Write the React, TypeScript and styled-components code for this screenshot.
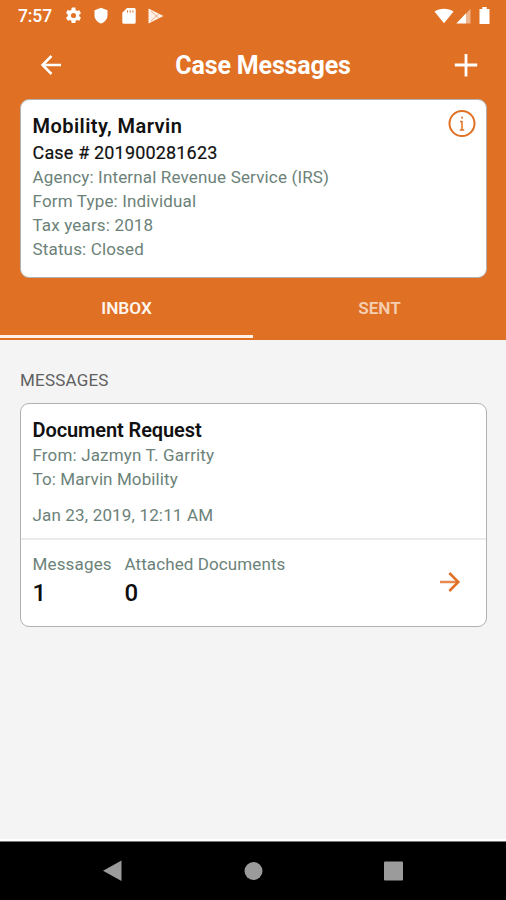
import React from "react";
import styled, { createGlobalStyle } from "styled-components";

const ORANGE = "#e07024";

const GlobalStyle = createGlobalStyle`
  * { box-sizing: border-box; }
  body { margin: 0; background: #f4f4f4; font-family: Roboto, "Liberation Sans", sans-serif; }
`;

const Screen = styled.div`
  display: flex;
  flex-direction: column;
  width: 506px;
  height: 900px;
  overflow: hidden;
  background: #f4f4f4;
`;

const Top = styled.header`
  display: flex;
  flex-direction: column;
  height: 340px;
  background: ${ORANGE};
`;

const StatusBar = styled.div`
  display: flex;
  justify-content: space-between;
  height: 32px;
  padding: 0 16px 0 18px;
  color: #fff;
`;

const StatusGroup = styled.div`
  display: flex;
  align-items: center;
  height: 31px;
`;

const Clock = styled.span`
  width: 46px;
  font-size: 17.5px;
  font-weight: 500;
  line-height: 32px;
  letter-spacing: -0.1px;
`;

const Icon = styled.svg<{ $w: number; $h: number; $ml?: number }>`
  display: block;
  flex: none;
  width: ${(p) => p.$w}px;
  height: ${(p) => p.$h}px;
  margin-left: ${(p) => p.$ml ?? 0}px;
`;

const TitleBar = styled.div`
  display: flex;
  align-items: center;
  height: 67px;
  padding: 0 28px 0 40px;
`;

const Title = styled.h1`
  flex: 1;
  margin: 0;
  padding: 1px 0 0 10px;
  font-size: 25px;
  font-weight: 700;
  line-height: 32px;
  letter-spacing: -0.15px;
  text-align: center;
  color: #fff;
`;

const Card = styled.section<{ $height: number }>`
  display: flex;
  flex-direction: column;
  flex: none;
  height: ${(p) => p.$height}px;
  margin: 0 19px 0 20px;
  border: 1.5px solid #b0b2b1;
  border-radius: 9px;
  background: #fff;
`;

const CaseBody = styled.div`
  display: flex;
  justify-content: space-between;
  padding: 13px 10px 0 11.5px;
`;

const InfoSlot = styled.div`
  margin-top: -3px;
`;

const Name = styled.h2<{ $spacing: number }>`
  margin: 0;
  font-size: 20px;
  font-weight: 600;
  line-height: 26px;
  letter-spacing: ${(p) => p.$spacing}px;
  color: #111;
`;

const CaseNumber = styled.div`
  padding-top: 1px;
  margin-bottom: -1px;
  font-size: 18px;
  line-height: 26px;
  letter-spacing: 0.17px;
  color: #111;
  -webkit-text-stroke: 0.2px #111;
`;

const Detail = styled.div<{ $spacing?: number; $gap?: number }>`
  margin-top: ${(p) => p.$gap ?? 0}px;
  font-size: 17px;
  line-height: 24px;
  letter-spacing: ${(p) => p.$spacing ?? 0.16}px;
  white-space: nowrap;
  color: #6c8279;
`;

const Tabs = styled.nav`
  display: flex;
  flex: 1;
`;

const Tab = styled.div<{ $active?: boolean }>`
  flex: 1;
  height: 60px;
  border-bottom: 3px solid ${(p) => (p.$active ? "#fff1e6" : "transparent")};
  font-size: 17.2px;
  font-weight: 600;
  line-height: 61px;
  text-align: center;
  color: ${(p) => (p.$active ? "#fff5ec" : "#f5ceb1")};
`;

const SectionLabel = styled.h3`
  margin: 0;
  padding: 28px 20px 11px;
  font-size: 17px;
  font-weight: 400;
  line-height: 24px;
  letter-spacing: 0.2px;
  color: #606060;
`;

const Content = styled.main`
  flex: 1;
`;

const MessageBody = styled.div`
  height: 136px;
  padding: 13px 11.5px 0;
  border-bottom: 2px solid #ebebeb;
`;

const MessageFooter = styled.div`
  display: flex;
  align-items: flex-start;
  padding: 12px 25px 0 11.5px;
`;

const Stat = styled.div<{ $width: number }>`
  width: ${(p) => p.$width}px;
`;

const StatValue = styled.div`
  margin-top: 1px;
  font-size: 24px;
  font-weight: 500;
  line-height: 32px;
  color: #0d0d0d;
`;

const ArrowSlot = styled.div`
  margin: 19px 0 0 auto;
`;

const NavBar = styled.footer`
  display: flex;
  align-items: center;
  justify-content: space-between;
  height: 59px;
  padding: 0 102px;
  border-top: 1px solid #777;
  background: #000;
  box-shadow: 0 -2px 0 #fff;
`;

export default function App() {
  return (
    <>
      <GlobalStyle />
      <Screen>
        <Top>
          <StatusBar>
            <StatusGroup>
              <Clock>7:57</Clock>
              <Icon $w={19} $h={19} viewBox="0 0 24 24" fill="#fff">
                <path d="M19.14 12.94c.04-.3.06-.61.06-.94s-.02-.64-.07-.94l2.03-1.58a.49.49 0 0 0 .12-.61l-1.92-3.32a.49.49 0 0 0-.59-.22l-2.39.96a7 7 0 0 0-1.62-.94l-.36-2.54A.48.48 0 0 0 13.92 2h-3.84a.48.48 0 0 0-.48.41l-.36 2.54c-.59.24-1.13.57-1.62.94l-2.39-.96a.48.48 0 0 0-.59.22L2.72 8.47a.48.48 0 0 0 .12.61l2.03 1.58a6 6 0 0 0 0 2.28l-2.03 1.58a.49.49 0 0 0-.12.61l1.92 3.32c.12.22.37.3.59.22l2.39-.96c.5.38 1.03.7 1.62.94l.36 2.54c.05.24.24.41.48.41h3.84c.24 0 .44-.17.48-.41l.36-2.54a7 7 0 0 0 1.62-.94l2.39.96c.22.08.47 0 .59-.22l1.92-3.32a.48.48 0 0 0-.12-.61zM12 15.2a3.2 3.2 0 1 1 0-6.4 3.2 3.2 0 0 1 0 6.4z" />
              </Icon>
              <Icon $w={14} $h={17} $ml={11} viewBox="0 0 14 17" fill="#fff">
                <path d="M7 .8 13.5 3.2v5c0 3.8-2.7 6.8-6.5 8.3C3.2 15 .5 12 .5 8.2v-5z" />
              </Icon>
              <Icon $w={14} $h={16} $ml={13.5} viewBox="0 0 14 16">
                <path d="M5 0h7.2A1.5 1.5 0 0 1 13.7 1.5v12.8a1.5 1.5 0 0 1-1.5 1.5H1.8A1.5 1.5 0 0 1 .3 14.3V4.7z" fill="#fff" />
                <path d="M5.5 2.5v2M8.2 2.5v2M10.9 2.5v2" stroke={ORANGE} strokeWidth="1.1" />
              </Icon>
              <Icon $w={16} $h={16} $ml={12} viewBox="0 0 16 16">
                <path d="M.5.5 15.5 8 .5 15.5z" fill="#fff1e6" />
                <path d="m3 3 8 7.5M3 13l8-7.5" fill="none" stroke="#eeb087" strokeWidth="1" />
              </Icon>
            </StatusGroup>
            <StatusGroup>
              <Icon $w={20} $h={16} viewBox="0 0 20 16" fill="#fff">
                <path d="M.5 3.5C6-.2 14-.2 19.5 3.5L10 15.2z" />
              </Icon>
              <Icon $w={15} $h={16} $ml={2} viewBox="0 0 15 16">
                <path d="M14.5.8v14.7H10V5.4z" fill="#efb48a" />
                <path d="M10 5.3v10.2H.3z" fill="#fff" />
              </Icon>
              <Icon $w={11} $h={17} $ml={8.5} viewBox="0 0 11 17" fill="#fff">
                <path d="M3.3 0h4.400v2H10.500v15H.5V2h2.800z" />
              </Icon>
            </StatusGroup>
          </StatusBar>
          <TitleBar>
            <Icon $w={22} $h={22} viewBox="0 0 22 22" fill="none" stroke="#fff" strokeWidth="2.5">
              <path d="M21 10H2.5M11.500 1 2.500 10l9 9" />
            </Icon>
            <Title>Case Messages</Title>
            <Icon $w={24} $h={24} viewBox="0 0 24 24" stroke="#fff" strokeWidth="2.800">
              <path d="M.8 11h22.400M12 0v22.400" />
            </Icon>
          </TitleBar>
          <Card $height={179}>
            <CaseBody>
              <div>
                <Name $spacing={0.45}>Mobility, Marvin</Name>
                <CaseNumber>Case # 201900281623</CaseNumber>
                <Detail>Agency: Internal Revenue Service (IRS)</Detail>
                <Detail>Form Type: Individual</Detail>
                <Detail>Tax years: 2018</Detail>
                <Detail>Status: Closed</Detail>
              </div>
              <InfoSlot>
                <Icon $w={28} $h={28} viewBox="0 0 28 28" fill="none" stroke={ORANGE}>
                  <circle cx="14" cy="13.500" r="12.500" strokeWidth="2" />
                  <path d="M14 11v9.500M14 6.500v2.300M12 11.500h2M11.800 20h4.400" strokeWidth="1.500" />
                </Icon>
              </InfoSlot>
            </CaseBody>
          </Card>
          <Tabs>
            <Tab $active>INBOX</Tab>
            <Tab>SENT</Tab>
          </Tabs>
        </Top>
        <Content>
          <SectionLabel>MESSAGES</SectionLabel>
          <Card $height={224}>
            <MessageBody>
              <Name $spacing={-0.1}>Document Request</Name>
              <Detail>From: Jazmyn T. Garrity</Detail>
              <Detail $spacing={0.1}>To: Marvin Mobility</Detail>
              <Detail $gap={12}>Jan 23, 2019, 12:11 AM</Detail>
            </MessageBody>
            <MessageFooter>
              <Stat $width={92}>
                <Detail>Messages</Detail>
                <StatValue>1</StatValue>
              </Stat>
              <Stat $width={180}>
                <Detail $spacing={0.1}>Attached Documents</Detail>
                <StatValue>0</StatValue>
              </Stat>
              <ArrowSlot>
                <Icon $w={22} $h={22} viewBox="0 0 22 22" fill="none" stroke={ORANGE} strokeWidth="2.500">
                  <path d="M1 11h18" stroke="#e68b50" />
                  <path d="M10.300 2 19.300 11l-9 9" />
                </Icon>
              </ArrowSlot>
            </MessageFooter>
          </Card>
        </Content>
        <NavBar>
          <Icon $w={20} $h={22} viewBox="0 0 20 22" fill="#9b9b9b">
            <path d="M19.500.5v20.500L1 10.800z" />
          </Icon>
          <Icon $w={20} $h={20} viewBox="0 0 20 20" fill="#9b9b9b">
            <circle cx="10.500" cy="10" r="9" />
          </Icon>
          <Icon $w={20} $h={20} viewBox="0 0 20 20" fill="#9b9b9b">
            <rect x="0" y=".5" width="19" height="19" rx="1" />
          </Icon>
        </NavBar>
      </Screen>
    </>
  );
}
